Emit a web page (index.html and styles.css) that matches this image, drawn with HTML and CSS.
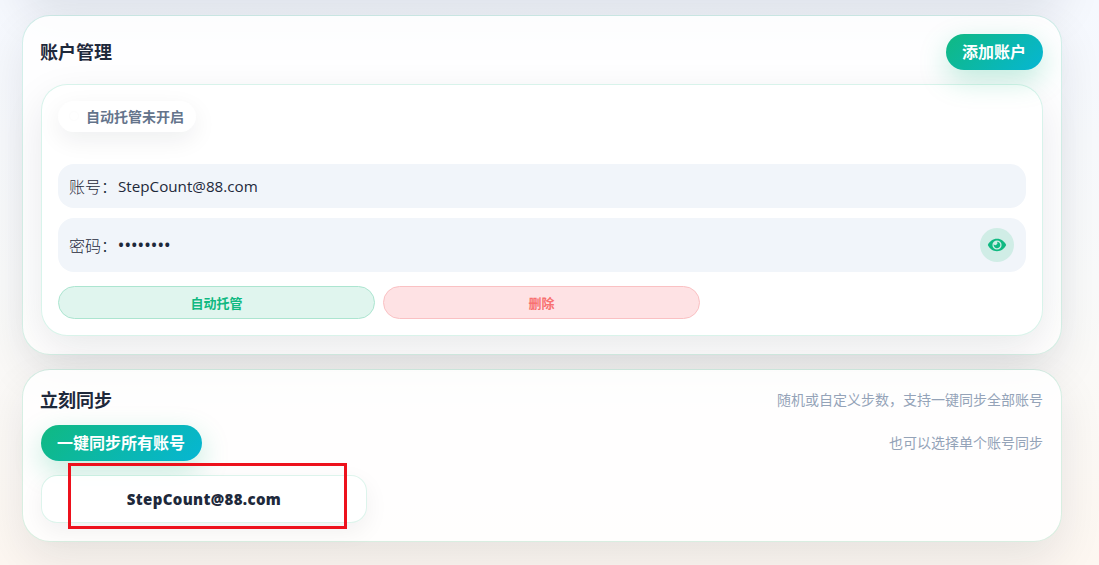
FILE: index.html
```html
<!DOCTYPE html>
<html lang="zh-CN">
<head>
  <meta charset="utf-8">
  <meta name="viewport" content="width=device-width, initial-scale=1">
  <title>账户管理</title>
  <link rel="stylesheet" href="styles.css">
</head>
<body>
  <main class="page">
    <div class="card card--scrolled" aria-hidden="true"></div>

    <section class="card">
      <header class="card__header">
        <h2 class="card__title">账户管理</h2>
        <button class="btn" type="button">添加账户</button>
      </header>

      <article class="account">
        <span class="status"><i class="status__dot"></i>自动托管未开启</span>

        <div class="field">
          <span>账号：</span><span class="field__value">StepCount@88.com</span>
        </div>
        <div class="field field--password">
          <span>密码：</span><span class="field__dots">••••••••</span>
          <button class="eye" type="button" aria-label="显示密码">
            <svg width="20" height="20" viewBox="0 0 24 24" aria-hidden="true">
              <path fill="currentColor" fill-rule="evenodd" d="M12 4.600C7 4.600 3 7.700 1 12c2 4.300 6 7.400 11 7.400s9-3.100 11-7.400C21 7.700 17 4.600 12 4.600Zm0 1.900a5.500 5.500 0 1 1 0 11 5.500 5.500 0 0 1 0-11Z"/>
              <path fill="currentColor" d="M12 8a4 4 0 1 1-3.900 3.100 1.900 1.900 0 0 0 3.900-3.100Z"/>
            </svg>
          </button>
        </div>

        <div class="actions">
          <button class="action action--auto" type="button">自动托管</button>
          <button class="action action--delete" type="button">删除</button>
        </div>
      </article>
    </section>

    <section class="card">
      <header class="card__header card__header--sync">
        <h2 class="card__title">立刻同步</h2>
        <span class="hint">随机或自定义步数，支持一键同步全部账号</span>
      </header>
      <div class="card__header">
        <button class="btn" type="button">一键同步所有账号</button>
        <span class="hint">也可以选择单个账号同步</span>
      </div>
      <div class="sync-list">
        <button class="sync-item" type="button">StepCount@88.com</button>
      </div>
      <div class="marker"></div>
    </section>
  </main>
</body>
</html>
```
FILE: styles.css
```css
*, *::before, *::after {
  margin: 0;
  padding: 0;
  box-sizing: border-box;
}

body {
  height: 100vh;
  overflow: hidden;
  background: linear-gradient(180deg, #f5f8fe 0%, #f9fafa 50%, #fdf7f1 100%);
  color: #1e293b;
  font-family: "Open Sans", "Noto Sans CJK SC", sans-serif;
  font-size: 16px;
}

button {
  border: none;
  font-family: inherit;
  cursor: pointer;
}

.page {
  display: flex;
  flex-direction: column;
  gap: 14px;
  width: 1040px;
  margin: -300px 0 0 22px;
}

.card {
  position: relative;
  padding: 18px;
  border: 1px solid rgba(16, 185, 129, .15);
  border-radius: 28px;
  background: rgba(255, 255, 255, .86);
  background-clip: padding-box;
  box-shadow: 0 18px 45px rgba(15, 23, 42, .09);
}

.card--scrolled {
  height: 300px;
  margin-bottom: 1px;
  border-color: transparent;
  background: none;
}

.card__header {
  display: flex;
  align-items: center;
  justify-content: space-between;
  height: 36px;
  margin-bottom: 14px;
}

.card__header--sync {
  height: 23px;
}

.card__title {
  margin-left: -1px;
  font-size: 18px;
  font-weight: 700;
  line-height: 24px;
}

.btn {
  height: 36px;
  padding: 0 17px 0 16px;
  border-radius: 18px;
  background: linear-gradient(135deg, #10b981, #06b6d4);
  box-shadow: 0 10px 28px rgba(16, 185, 129, .26);
  color: #fff;
  font-size: 16px;
  font-weight: 700;
  line-height: 36px;
}

.account {
  display: flex;
  flex-direction: column;
  align-items: stretch;
  padding: 16px;
  border: 1px solid rgba(16, 185, 129, .16);
  border-radius: 26px;
  background: rgba(255, 255, 255, .95);
  background-clip: padding-box;
  box-shadow: 0 14px 40px rgba(15, 23, 42, .09);
}

.status {
  display: flex;
  align-items: center;
  align-self: flex-start;
  gap: 8px;
  height: 31px;
  margin-bottom: 32px;
  padding: 0 12px 2px 12px;
  border-radius: 16px;
  background: #fff;
  box-shadow: 0 8px 24px rgba(15, 23, 42, .07);
  color: #64748b;
  font-size: 14px;
  font-weight: 600;
}

.status__dot {
  width: 8px;
  height: 8px;
  border-radius: 50%;
  background: #fff;
  box-shadow: 0 0 3px rgba(15, 23, 42, .03);
}

.field {
  display: flex;
  align-items: center;
  height: 44px;
  margin-bottom: 10px;
  padding: 0 12px 0 11px;
  border-radius: 16px;
  background: #f1f5fa;
  font-weight: 300;
}

.field--password {
  height: 54px;
  margin-bottom: 14px;
}

.field__value {
  margin-left: 1px;
  font-size: 15.2px;
  font-weight: 400;
}

.field__dots {
  margin-left: 1px;
  font-weight: 600;
  letter-spacing: .6px;
}

.eye {
  display: grid;
  place-items: center;
  width: 34px;
  height: 34px;
  margin-left: auto;
  padding-right: 1px;
  border-radius: 50%;
  background: #d0ede6;
  color: #10b981;
}

.actions {
  display: grid;
  grid-template-columns: repeat(3, 317px);
  gap: 8px;
}

.action {
  height: 33px;
  padding-bottom: 1px;
  border: 1px solid;
  border-radius: 17px;
  font-size: 13px;
  font-weight: 700;
}

.action--auto {
  border-color: #ace5d0;
  background: #e0f5ee;
  color: #10b981;
}

.action--delete {
  border-color: #fac1c3;
  background: #fee2e4;
  color: #f87171;
}

.hint {
  padding-bottom: 2px;
  color: #94a3b8;
  font-size: 14px;
}

.sync-list {
  display: grid;
  grid-template-columns: repeat(3, 1fr);
  gap: 12px;
}

.sync-item {
  height: 48px;
  border: 1px solid rgba(16, 185, 129, .14);
  border-radius: 16px;
  background: rgba(255, 255, 255, .9);
  background-clip: padding-box;
  box-shadow: 0 8px 24px rgba(15, 23, 42, .06);
  color: #1e293b;
  font-size: 15px;
  font-weight: 800;
  letter-spacing: .35px;
}

.marker {
  position: absolute;
  top: 93px;
  left: 45px;
  width: 279px;
  height: 66px;
  border: 3px solid #ed111c;
}
```
